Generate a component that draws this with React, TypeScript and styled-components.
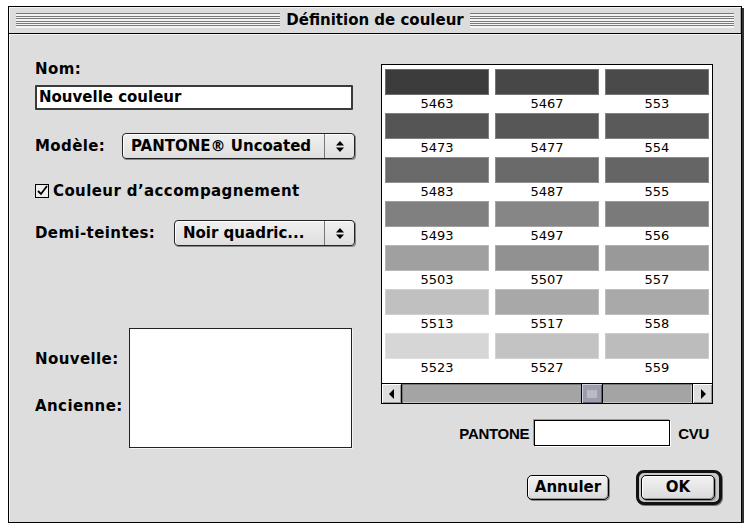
import React from "react";
import styled, { createGlobalStyle } from "styled-components";

const Global = createGlobalStyle`
  html, body { margin: 0; padding: 0; background: #ffffff; }
  body { font-family: "DejaVu Sans", sans-serif; }
  * { box-sizing: border-box; }
`;

const Window = styled.div`
  margin: 6px 0 0 8px;
  width: 734px;
  height: 517px;
  background: #dddddd;
  border: 1px solid #000;
  box-shadow: 2px 2px 0 #333;
  display: flex;
  flex-direction: column;
`;

const TitleBar = styled.div`
  height: 27px;
  display: flex;
  align-items: center;
  padding: 0 7px;
  border-bottom: 1px solid #000;
  background: #dcdcdc;
  box-shadow: inset 1px 1px 0 #f4f4f4, inset -1px 0 0 #aaa;
`;

const Stripes = styled.div`
  flex: 1;
  height: 15px;
  background: repeating-linear-gradient(
    to bottom,
    #7a7a7a 0px,
    #7a7a7a 1px,
    #f4f4f4 1px,
    #f4f4f4 2.5px
  );
`;

const Title = styled.div`
  font: bold 15px "DejaVu Sans", sans-serif;
  color: #000;
  padding: 0 6px;
  white-space: nowrap;
`;

const Content = styled.div`
  flex: 1;
  display: flex;
  align-items: flex-start;
  gap: 25px;
  padding: 27px 0 0 26px;
  box-shadow: inset 1px 1px 0 #f4f4f4;
`;

const LeftCol = styled.div`
  width: 321px;
  display: flex;
  flex-direction: column;
`;

const Label = styled.div<{ $w?: number }>`
  font: bold 15px "DejaVu Sans", sans-serif;
  letter-spacing: 0.4px;
  line-height: 16px;
  color: #000;
  white-space: nowrap;
  ${(p) => (p.$w ? `width: ${p.$w}px; flex: none;` : "")}
`;

const TextField = styled.div`
  margin-top: 8px;
  width: 318px;
  height: 25px;
  background: #fff;
  border: 2px solid #3a3a3a;
  border-radius: 1px;
  font: bold 15px "DejaVu Sans", sans-serif;
  line-height: 21px;
  padding-left: 2px;
  color: #000;
`;

const Row = styled.div<{ $mt: number }>`
  margin-top: ${(p) => p.$mt}px;
  display: flex;
  align-items: center;
`;

const Popup = styled.div<{ $w: number }>`
  width: ${(p) => p.$w}px;
  height: 26px;
  display: flex;
  border: 1px solid #222;
  border-radius: 4px;
  background: linear-gradient(#f0f0f0, #dedede);
  box-shadow: 1px 1px 0 #888, inset 1px 1px 0 #fff;
`;

const PopupText = styled.div`
  flex: 1;
  font: bold 15px "DejaVu Sans", sans-serif;
  line-height: 24px;
  padding-left: 8px;
  color: #000;
  white-space: nowrap;
  overflow: hidden;
`;

const PopupArrows = styled.div`
  width: 30px;
  border-left: 1px solid #777;
  display: flex;
  align-items: center;
  justify-content: center;
`;

const CheckRow = styled.div`
  margin-top: 23px;
  height: 18px;
  display: flex;
  align-items: center;
  gap: 4px;
`;

const CheckBox = styled.div`
  width: 14px;
  height: 14px;
  border: 1px solid #000;
  background: #eee;
  display: flex;
  align-items: center;
  justify-content: center;
`;

const Compare = styled.div`
  margin-top: 82px;
  display: flex;
`;

const CompareLabels = styled.div`
  width: 94px;
  padding-top: 23px;
  display: flex;
  flex-direction: column;
  gap: 31px;
`;

const CompareBox = styled.div`
  width: 223px;
  height: 120px;
  background: #fff;
  border: 1px solid #222;
  box-shadow: 1px 1px 0 #f4f4f4;
`;

const RightCol = styled.div`
  width: 341px;
  padding-top: 3px;
  display: flex;
  flex-direction: column;
`;

const List = styled.div`
  width: 332px;
  height: 320px;
  background: #fff;
  border: 1px solid #000;
  padding: 4px 3px 0 3px;
  display: grid;
  grid-template-columns: 104px 104px 104px;
  column-gap: 6px;
  grid-auto-rows: 44px;
  align-content: start;
`;

const Cell = styled.div`
  display: flex;
  flex-direction: column;
`;

const Swatch = styled.div<{ $c: string }>`
  height: 26px;
  background: ${(p) => p.$c};
  box-shadow: inset 0 0 0 1px rgba(255, 255, 255, 0.25);
`;

const SwatchLabel = styled.div`
  height: 16px;
  font: 13px "DejaVu Sans", sans-serif;
  line-height: 17px;
  text-align: center;
  color: #000;
`;

const ScrollBar = styled.div`
  margin-top: -1px;
  width: 332px;
  height: 21px;
  border: 1px solid #000;
  display: flex;
  background: #a4a4a4;
`;

const ArrowBox = styled.div<{ $side: "l" | "r" }>`
  width: 20px;
  flex: none;
  background: #dddddd;
  ${(p) => (p.$side === "l" ? "border-right" : "border-left")}: 1px solid #000;
  box-shadow: inset 1px 1px 0 #fff, inset -1px -1px 0 #999;
  display: flex;
  align-items: center;
  justify-content: center;
`;

const Track = styled.div`
  flex: 1;
  position: relative;
  box-shadow: inset 1px 1px 0 #777, inset -1px -1px 0 #c8c8c8;
`;

const Thumb = styled.div`
  position: absolute;
  top: 0;
  bottom: 0;
  width: 22px;
  background: #9c9cab;
  border-left: 1px solid #000;
  border-right: 1px solid #000;
  box-shadow: inset 1px 1px 0 #d0d0dc, inset -1px -1px 0 #5e5e6c;
  display: flex;
  align-items: center;
  justify-content: center;
`;

const PantoneRow = styled.div`
  margin-top: 16px;
  height: 26px;
  padding-right: 13px;
  display: flex;
  align-items: center;
  justify-content: flex-end;
  gap: 5px;
`;

const NarrowLabel = styled.div`
  font: bold 15px "Liberation Sans", Arial, sans-serif;
  color: #000;
  letter-spacing: -0.3px;
`;

const PantoneField = styled.div`
  width: 136px;
  height: 26px;
  background: #fff;
  border: 1px solid #000;
  box-shadow: 1px 1px 0 #fff, -1px -1px 0 #999;
  margin-right: 3px;
`;

const ButtonRow = styled.div`
  margin-top: 24px;
  display: flex;
  justify-content: flex-end;
  align-items: center;
  gap: 27px;
`;

const Button = styled.div<{ $w: number }>`
  width: ${(p) => p.$w}px;
  height: 25px;
  border: 1px solid #000;
  border-radius: 5px;
  background: linear-gradient(#f2f2f2, #dadada);
  box-shadow: inset 1px 1px 0 #fff, inset -1px -1px 0 #999, 1px 1px 0 #888;
  font: bold 15px "DejaVu Sans", sans-serif;
  line-height: 23px;
  text-align: center;
  color: #000;
`;

const DefaultRing = styled.div`
  width: 86px;
  height: 35px;
  border: 3px solid #111;
  border-radius: 8px;
  padding: 2px;
  background: #c8c8c8;
  box-shadow: 1px 1px 0 #777;
  display: flex;
`;

const UpDown = () => (
  <svg width="10" height="13" viewBox="0 0 10 13">
    <path d="M1 5.5 L5 1 L9 5.5 Z" fill="#000" />
    <path d="M1 7.5 L5 12 L9 7.5 Z" fill="#000" />
  </svg>
);

const swatches: [string, string][][] = [
  [["#3c3c3c", "5463"], ["#474747", "5467"], ["#4a4a4a", "553"]],
  [["#555555", "5473"], ["#575757", "5477"], ["#5a5a5a", "554"]],
  [["#6a6a6a", "5483"], ["#6a6a6a", "5487"], ["#656565", "555"]],
  [["#808080", "5493"], ["#868686", "5497"], ["#7a7a7a", "556"]],
  [["#a0a0a0", "5503"], ["#919191", "5507"], ["#999999", "557"]],
  [["#c0c0c0", "5513"], ["#a8a8a8", "5517"], ["#a9a9a9", "558"]],
  [["#d6d6d6", "5523"], ["#c3c3c3", "5527"], ["#bcbcbc", "559"]],
];

export default function App() {
  return (
    <>
      <Global />
      <Window>
        <TitleBar>
          <Stripes />
          <Title>Définition de couleur</Title>
          <Stripes />
        </TitleBar>
        <Content>
          <LeftCol>
            <Label>Nom:</Label>
            <TextField>Nouvelle couleur</TextField>
            <Row $mt={23}>
              <Label $w={87}>Modèle:</Label>
              <Popup $w={233}>
                <PopupText>PANTONE® Uncoated</PopupText>
                <PopupArrows>
                  <UpDown />
                </PopupArrows>
              </Popup>
            </Row>
            <CheckRow>
              <CheckBox>
                <svg width="12" height="12" viewBox="0 0 12 12">
                  <path d="M2 6 L5 9 L11 1" stroke="#000" strokeWidth="1.8" fill="none" />
                </svg>
              </CheckBox>
              <Label>Couleur d’accompagnement</Label>
            </CheckRow>
            <Row $mt={20}>
              <Label $w={139}>Demi-teintes:</Label>
              <Popup $w={181}>
                <PopupText>Noir quadric...</PopupText>
                <PopupArrows>
                  <UpDown />
                </PopupArrows>
              </Popup>
            </Row>
            <Compare>
              <CompareLabels>
                <Label>Nouvelle:</Label>
                <Label>Ancienne:</Label>
              </CompareLabels>
              <CompareBox />
            </Compare>
          </LeftCol>
          <RightCol>
            <List>
              {swatches.flat().map(([c, n]) => (
                <Cell key={n}>
                  <Swatch $c={c} />
                  <SwatchLabel>{n}</SwatchLabel>
                </Cell>
              ))}
            </List>
            <ScrollBar>
              <ArrowBox $side="l">
                <svg width="6" height="10" viewBox="0 0 6 10">
                  <path d="M5 0 L0 5 L5 10 Z" fill="#000" />
                </svg>
              </ArrowBox>
              <Track>
                <Thumb style={{ left: 179 }}>
                  <svg width="10" height="10" viewBox="0 0 10 10">
                    {[1, 3, 5, 7, 9].map((x) => (
                      <line key={x} x1={x} y1="1" x2={x} y2="9" stroke="#e8e8f0" strokeWidth="0.8" />
                    ))}
                  </svg>
                </Thumb>
              </Track>
              <ArrowBox $side="r">
                <svg width="6" height="10" viewBox="0 0 6 10">
                  <path d="M1 0 L6 5 L1 10 Z" fill="#000" />
                </svg>
              </ArrowBox>
            </ScrollBar>
            <PantoneRow>
              <NarrowLabel>PANTONE</NarrowLabel>
              <PantoneField />
              <NarrowLabel>CVU</NarrowLabel>
            </PantoneRow>
            <ButtonRow>
              <Button $w={82}>Annuler</Button>
              <DefaultRing>
                <Button $w={74}>OK</Button>
              </DefaultRing>
            </ButtonRow>
          </RightCol>
        </Content>
      </Window>
    </>
  );
}
